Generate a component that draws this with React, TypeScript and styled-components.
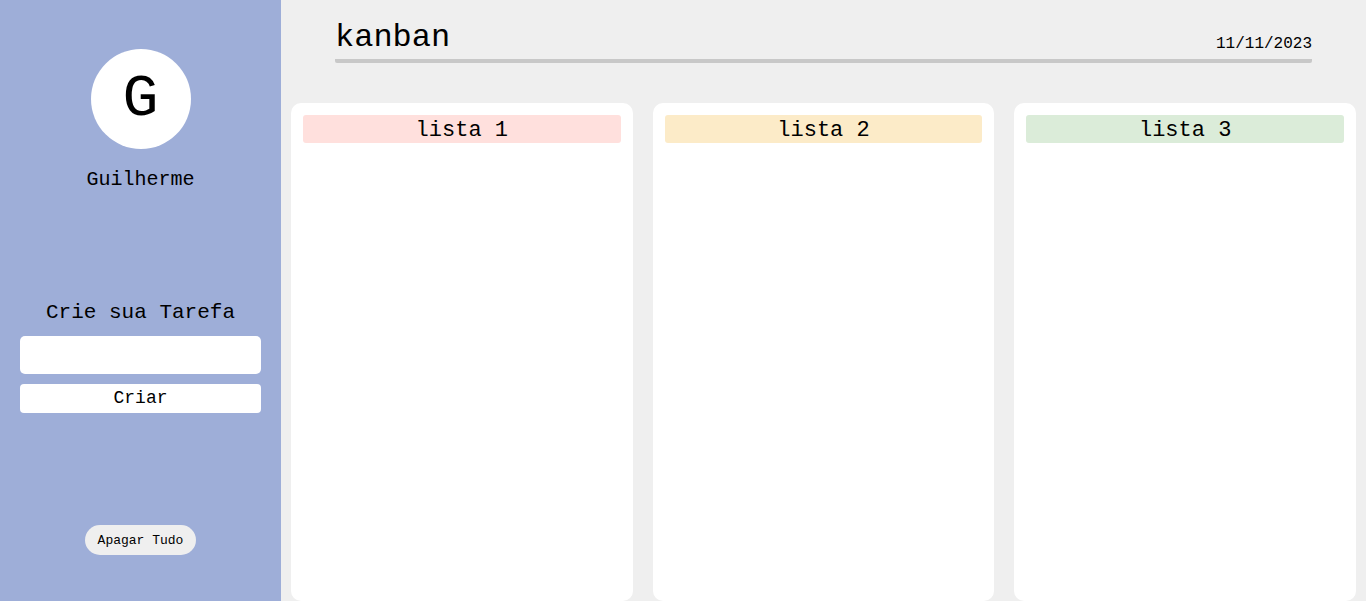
import React from "react";
import styled, { createGlobalStyle } from "styled-components";

const Global = createGlobalStyle`
  html, body { margin: 0; padding: 0; height: 100%; }
  body { font-family: "Liberation Mono", "Courier New", monospace; background: #efefef; overflow: hidden; }
  #root { height: 100%; }
  * { box-sizing: border-box; }
`;

const Layout = styled.div`
  display: flex;
  height: 601px;
`;

const Sidebar = styled.aside`
  width: 281px;
  flex-shrink: 0;
  background: #9eaed8;
  display: flex;
  flex-direction: column;
  align-items: center;
  padding: 49px 20px 0;
`;

const Avatar = styled.div`
  width: 100px;
  height: 100px;
  border-radius: 50%;
  background: #fff;
  display: flex;
  align-items: center;
  justify-content: center;
  font-size: 60px;
  color: #000;
`;

const UserName = styled.div`
  margin-top: 19px;
  font-size: 20px;
  line-height: 24px;
  color: #000;
`;

const Form = styled.div`
  width: 100%;
  margin-top: 109px;
  display: flex;
  flex-direction: column;
  align-items: center;
`;

const FormTitle = styled.div`
  font-size: 21px;
  line-height: 24px;
  color: #000;
`;

const Input = styled.input`
  margin-top: 11px;
  width: 100%;
  height: 38px;
  border: none;
  border-radius: 5px;
  background: #fff;
  outline: none;
`;

const CreateButton = styled.button`
  margin-top: 10px;
  width: 100%;
  height: 29px;
  border: none;
  border-radius: 4px;
  background: #fff;
  font-family: inherit;
  font-size: 18px;
  line-height: 29px;
  color: #000;
  padding: 0;
`;

const ClearButton = styled.button`
  margin-top: 112px;
  height: 30px;
  padding: 0 13px;
  border: none;
  border-radius: 15px;
  background: #efefef;
  font-family: inherit;
  font-size: 13px;
  color: #000;
`;

const Main = styled.main`
  flex: 1;
  display: flex;
  flex-direction: column;
  padding: 0 10px;
  min-width: 0;
`;

const Header = styled.header`
  margin: 0 44px;
  padding-top: 22px;
  padding-bottom: 5px;
  display: flex;
  justify-content: space-between;
  align-items: flex-end;
  border-bottom: 4px solid #c8c8c8;
  border-radius: 2px;
`;

const Title = styled.h1`
  margin: 0;
  font-weight: normal;
  font-size: 32px;
  line-height: 32px;
  color: #000;
`;

const DateText = styled.span`
  font-size: 16px;
  line-height: 18px;
  color: #000;
  margin-bottom: 1px;
`;

const Board = styled.div`
  flex: 1;
  margin-top: 40px;
  display: grid;
  grid-template-columns: repeat(3, 1fr);
  gap: 20px;
`;

const Column = styled.section`
  background: #fff;
  border-radius: 10px;
  padding: 12px;
`;

const ColumnTitle = styled.div<{ $bg: string }>`
  background: ${(p) => p.$bg};
  height: 28px;
  padding-top: 4px;
  border-radius: 3px;
  text-align: center;
  font-size: 22px;
  line-height: 24px;
  color: #000;
`;

const lists = [
  { title: "lista 1", bg: "#ffe0dd" },
  { title: "lista 2", bg: "#fcebc8" },
  { title: "lista 3", bg: "#dbecd9" },
];

export default function App() {
  return (
    <>
      <Global />
      <Layout>
        <Sidebar>
          <Avatar>G</Avatar>
          <UserName>Guilherme</UserName>
          <Form>
            <FormTitle>Crie sua Tarefa</FormTitle>
            <Input />
            <CreateButton>Criar</CreateButton>
            <ClearButton>Apagar Tudo</ClearButton>
          </Form>
        </Sidebar>
        <Main>
          <Header>
            <Title>kanban</Title>
            <DateText>11/11/2023</DateText>
          </Header>
          <Board>
            {lists.map((l) => (
              <Column key={l.title}>
                <ColumnTitle $bg={l.bg}>{l.title}</ColumnTitle>
              </Column>
            ))}
          </Board>
        </Main>
      </Layout>
    </>
  );
}
